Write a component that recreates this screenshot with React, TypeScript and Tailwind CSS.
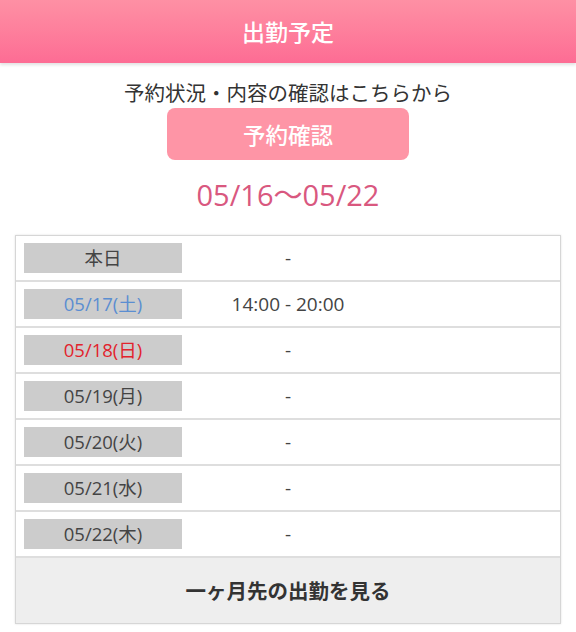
import React from "react";

const rows: { d: string; t: string; c: string }[] = [
  { d: "本日", t: "-", c: "text-[#444444]" },
  { d: "05/17(土)", t: "14:00 - 20:00", c: "text-[#5b8ed1]" },
  { d: "05/18(日)", t: "-", c: "text-[#e2232c]" },
  { d: "05/19(月)", t: "-", c: "text-[#444444]" },
  { d: "05/20(火)", t: "-", c: "text-[#444444]" },
  { d: "05/21(水)", t: "-", c: "text-[#444444]" },
  { d: "05/22(木)", t: "-", c: "text-[#444444]" },
];

const latin = { fontFamily: '"Open Sans", "Noto Sans CJK JP", sans-serif' };

export default function App() {
  return (
    <div
      className="w-[576px] h-[632px] bg-white overflow-hidden"
      style={{ fontFamily: '"Noto Sans CJK JP", "Noto Sans", sans-serif' }}
    >
      <div className="h-[63px] flex items-center justify-center bg-gradient-to-b from-[#fe90a4] to-[#fd6c94] shadow-[0_2px_3px_rgba(0,0,0,0.12)]">
        <span className="text-white text-[23px] font-medium leading-none">出勤予定</span>
      </div>
      <div className="flex flex-col items-center">
        <div className="mt-[16px] text-[20.5px] leading-[26px] text-[#333333]">
          予約状況・内容の確認はこちらから
        </div>
        <div className="mt-[3px] w-[242px] h-[52px] rounded-[8px] bg-[#fe95a6] flex items-center justify-center">
          <span className="text-white text-[22.5px] font-medium leading-none">予約確認</span>
        </div>
        <div className="mt-[17px] text-[29px] leading-[36px] text-[#d9587f]" style={latin}>
          05/16〜05/22
        </div>
      </div>
      <div className="mx-[15px] mt-[22px] border border-[#d6d6d6] shadow-[0_0_2px_rgba(0,0,0,0.12)]">
        {rows.map((r, i) => (
          <div
            key={i}
            className="h-[46px] flex items-center border-b-2 border-[#dedede] pl-[8px]"
          >
            <div
              className={`w-[158px] h-[30px] bg-[#cccccc] flex items-center justify-center text-[18.5px] ${r.c}`}
              style={latin}
            >
              {r.d}
            </div>
            <div
              className="w-[212px] flex items-center justify-center text-[19px] text-[#444444]"
              style={latin}
            >
              {r.t}
            </div>
          </div>
        ))}
        <div className="h-[65px] bg-[#eeeeee] flex items-center justify-center">
          <span className="text-[20.5px] font-bold text-[#333333]">一ヶ月先の出勤を見る</span>
        </div>
      </div>
    </div>
  );
}
